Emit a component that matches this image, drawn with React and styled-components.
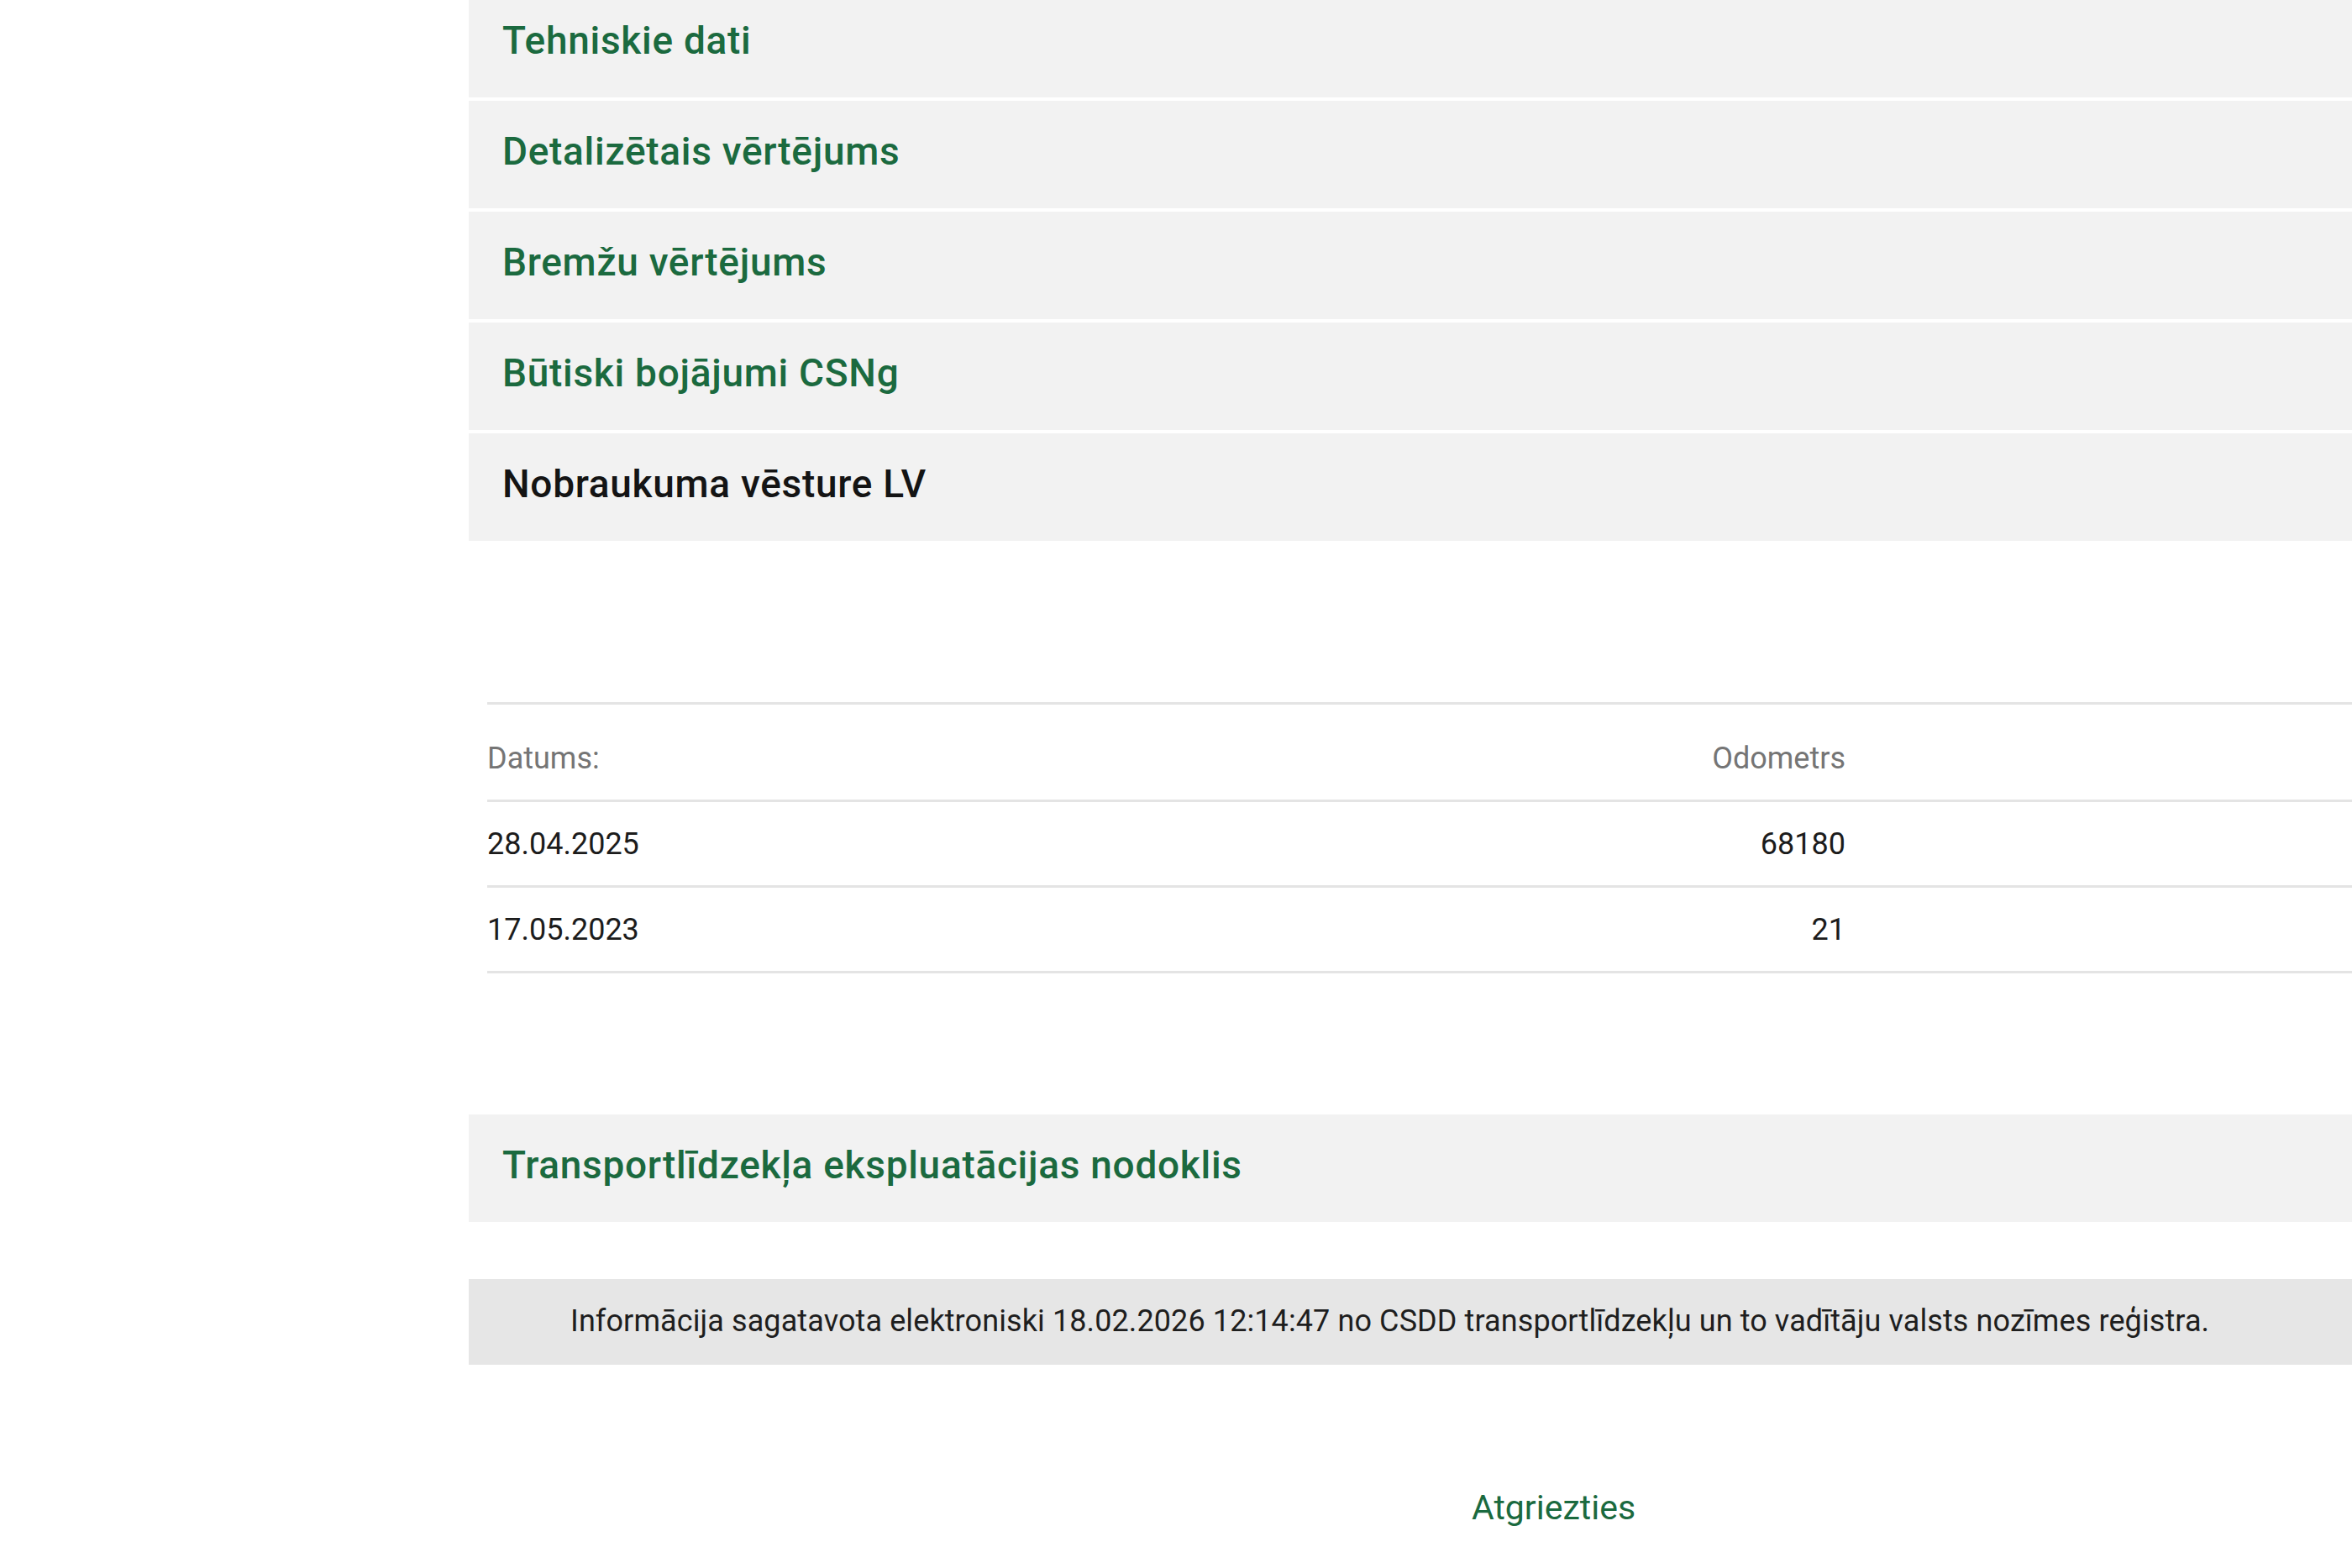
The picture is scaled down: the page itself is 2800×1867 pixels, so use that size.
import React from "react";
import styled, { createGlobalStyle } from "styled-components";

const GlobalStyle = createGlobalStyle`
  html, body {
    margin: 0;
    padding: 0;
    background: #ffffff;
    overflow-x: hidden;
  }
  body {
    font-family: Roboto, "Liberation Sans", Arial, sans-serif;
    color: #1f1f1f;
  }
`

const Page = styled.div`
  display: grid;
  grid-template-columns: 558px 1fr;
  width: 2800px;
  min-height: 1867px;
  overflow: hidden;
`

const Sidebar = styled.aside``

const Main = styled.main`
  display: flex;
  flex-direction: column;
  margin-top: -12px;
`

const SectionList = styled.div`
  display: flex;
  flex-direction: column;
  gap: 4px;
`

const SectionHeader = styled.div`
  display: flex;
  align-items: center;
  height: 128px;
  box-sizing: border-box;
  padding: 0 40px 8px;
  background: #f2f2f2;
  font-size: 46px;
  letter-spacing: 0.7px;
  font-weight: 500;
  color: ${({ $active }) => ($active ? "#141414" : "#1b6a3f")};
  margin-top: ${({ $gap }) => $gap || 0}px;
  cursor: pointer;
`

const Table = styled.div`
  margin: 192px 0 0 22px;
  border-top: 3px solid #e4e4e4;
  font-size: 36px;
`

const Row = styled.div`
  display: grid;
  grid-template-columns: 1217px 400px 1fr;
  align-items: center;
  box-sizing: border-box;
  height: ${({ $head }) => ($head ? 116 : 102)}px;
  padding-top: ${({ $head }) => ($head ? 14 : 0)}px;
  border-bottom: 3px solid #e4e4e4;
  color: ${({ $head }) => ($head ? "#757575" : "#1c1c1c")};
`

const Cell = styled.div`
  text-align: ${({ $right }) => ($right ? "right" : "left")};
`

const InfoBar = styled.div`
  display: flex;
  align-items: center;
  height: 102px;
  margin-top: 68px;
  padding-left: 121px;
  padding-bottom: 3px;
  box-sizing: border-box;
  background: #e6e6e6;
  font-size: 36px;
  letter-spacing: 0.1px;
  color: #1e1e1e;
  white-space: nowrap;
`

const BackRow = styled.div`
  display: flex;
  margin-top: 146px;
  padding-left: 1194px;
`

const BackLink = styled.a`
  font-size: 41px;
  color: #1b6a3f;
  text-decoration: none;
`

const sections = [
  "Tehniskie dati",
  "Detalizētais vērtējums",
  "Bremžu vērtējums",
  "Būtiski bojājumi CSNg",
];

const mileage = [
  { date: "28.04.2025", odo: "68180" },
  { date: "17.05.2023", odo: "21" },
];

const App = () => (
  <>
    <GlobalStyle />
    <Page>
      <Sidebar />
      <Main>
        <SectionList>
          {sections.map((s) => (
            <SectionHeader key={s}>{s}</SectionHeader>
          ))}
          <SectionHeader $active>Nobraukuma vēsture LV</SectionHeader>
        </SectionList>

        <Table>
          <Row $head>
            <Cell>Datums:</Cell>
            <Cell $right>Odometrs</Cell>
            <Cell />
          </Row>
          {mileage.map((m) => (
            <Row key={m.date}>
              <Cell>{m.date}</Cell>
              <Cell $right>{m.odo}</Cell>
              <Cell />
            </Row>
          ))}
        </Table>

        <SectionHeader $gap={168}>Transportlīdzekļa ekspluatācijas nodoklis</SectionHeader>

        <InfoBar>
          Informācija sagatavota elektroniski 18.02.2026 12:14:47 no CSDD transportlīdzekļu un to vadītāju valsts nozīmes reģistra.
        </InfoBar>

        <BackRow>
          <BackLink href="#">Atgriezties</BackLink>
        </BackRow>
      </Main>
    </Page>
  </>
);

export default App;
